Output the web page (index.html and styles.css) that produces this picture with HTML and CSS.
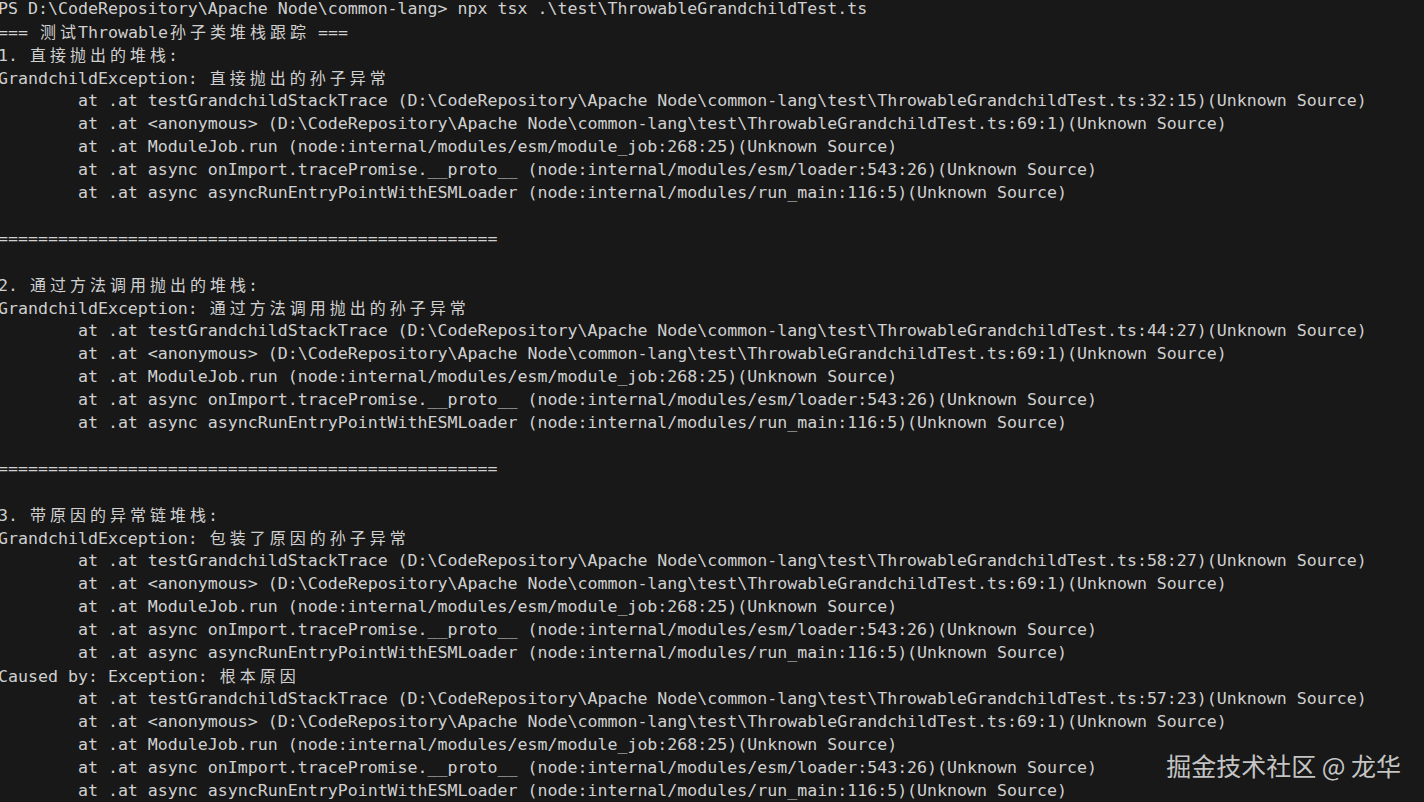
FILE: index.html
```html
<!DOCTYPE html>
<html lang="zh">
<head>
<meta charset="utf-8">
<title>Terminal</title>
<link rel="stylesheet" href="styles.css">
</head>
<body>
<div class="term">
<div class="line">PS D:\CodeRepository\Apache Node\common-lang&gt; npx tsx .\test\ThrowableGrandchildTest.ts</div>
<div class="line">=== <span class="cjk">测试</span>Throwable<span class="cjk">孙子类堆栈跟踪</span> ===</div>
<div class="line">1. <span class="cjk">直接抛出的堆栈</span>:</div>
<div class="line">GrandchildException: <span class="cjk">直接抛出的孙子异常</span></div>
<div class="line">        at .at testGrandchildStackTrace (D:\CodeRepository\Apache Node\common-lang\test\ThrowableGrandchildTest.ts:32:15)(Unknown Source)</div>
<div class="line">        at .at &lt;anonymous&gt; (D:\CodeRepository\Apache Node\common-lang\test\ThrowableGrandchildTest.ts:69:1)(Unknown Source)</div>
<div class="line">        at .at ModuleJob.run (node:internal/modules/esm/module_job:268:25)(Unknown Source)</div>
<div class="line">        at .at async onImport.tracePromise.__proto__ (node:internal/modules/esm/loader:543:26)(Unknown Source)</div>
<div class="line">        at .at async asyncRunEntryPointWithESMLoader (node:internal/modules/run_main:116:5)(Unknown Source)</div>
<div class="line"> </div>
<div class="line">==================================================</div>
<div class="line"> </div>
<div class="line">2. <span class="cjk">通过方法调用抛出的堆栈</span>:</div>
<div class="line">GrandchildException: <span class="cjk">通过方法调用抛出的孙子异常</span></div>
<div class="line">        at .at testGrandchildStackTrace (D:\CodeRepository\Apache Node\common-lang\test\ThrowableGrandchildTest.ts:44:27)(Unknown Source)</div>
<div class="line">        at .at &lt;anonymous&gt; (D:\CodeRepository\Apache Node\common-lang\test\ThrowableGrandchildTest.ts:69:1)(Unknown Source)</div>
<div class="line">        at .at ModuleJob.run (node:internal/modules/esm/module_job:268:25)(Unknown Source)</div>
<div class="line">        at .at async onImport.tracePromise.__proto__ (node:internal/modules/esm/loader:543:26)(Unknown Source)</div>
<div class="line">        at .at async asyncRunEntryPointWithESMLoader (node:internal/modules/run_main:116:5)(Unknown Source)</div>
<div class="line"> </div>
<div class="line">==================================================</div>
<div class="line"> </div>
<div class="line">3. <span class="cjk">带原因的异常链堆栈</span>:</div>
<div class="line">GrandchildException: <span class="cjk">包装了原因的孙子异常</span></div>
<div class="line">        at .at testGrandchildStackTrace (D:\CodeRepository\Apache Node\common-lang\test\ThrowableGrandchildTest.ts:58:27)(Unknown Source)</div>
<div class="line">        at .at &lt;anonymous&gt; (D:\CodeRepository\Apache Node\common-lang\test\ThrowableGrandchildTest.ts:69:1)(Unknown Source)</div>
<div class="line">        at .at ModuleJob.run (node:internal/modules/esm/module_job:268:25)(Unknown Source)</div>
<div class="line">        at .at async onImport.tracePromise.__proto__ (node:internal/modules/esm/loader:543:26)(Unknown Source)</div>
<div class="line">        at .at async asyncRunEntryPointWithESMLoader (node:internal/modules/run_main:116:5)(Unknown Source)</div>
<div class="line">Caused by: Exception: <span class="cjk">根本原因</span></div>
<div class="line">        at .at testGrandchildStackTrace (D:\CodeRepository\Apache Node\common-lang\test\ThrowableGrandchildTest.ts:57:23)(Unknown Source)</div>
<div class="line">        at .at &lt;anonymous&gt; (D:\CodeRepository\Apache Node\common-lang\test\ThrowableGrandchildTest.ts:69:1)(Unknown Source)</div>
<div class="line">        at .at ModuleJob.run (node:internal/modules/esm/module_job:268:25)(Unknown Source)</div>
<div class="line">        at .at async onImport.tracePromise.__proto__ (node:internal/modules/esm/loader:543:26)(Unknown Source)</div>
<div class="line">        at .at async asyncRunEntryPointWithESMLoader (node:internal/modules/run_main:116:5)(Unknown Source)</div>
</div>
<div class="watermark">掘金技术社区 @ 龙华</div>
</body>
</html>
```

FILE: styles.css
```css
html, body {
  margin: 0;
  padding: 0;
  background: #181818;
  width: 1424px;
  height: 802px;
  overflow: hidden;
}
.term {
  margin-left: -2px;
  margin-top: -3px;
  color: #d0d0d0;
  font-family: "DejaVu Sans Mono", "Liberation Mono", "Noto Sans CJK SC", monospace;
  font-size: 16.6px;
}
.line {
  white-space: pre;
  height: 23px;
  line-height: 23px;
}
.cjk {
  font-family: "Noto Sans CJK SC", sans-serif;
  font-size: 16px;
  letter-spacing: 4px;
  padding-left: 2px;
  margin-right: -2px;
}
.watermark {
  position: absolute;
  right: 23px;
  bottom: 22px;
  font-family: "Noto Sans CJK SC", sans-serif;
  font-size: 25px;
  line-height: 30px;
  color: rgba(230, 230, 230, 0.85);
}
```
